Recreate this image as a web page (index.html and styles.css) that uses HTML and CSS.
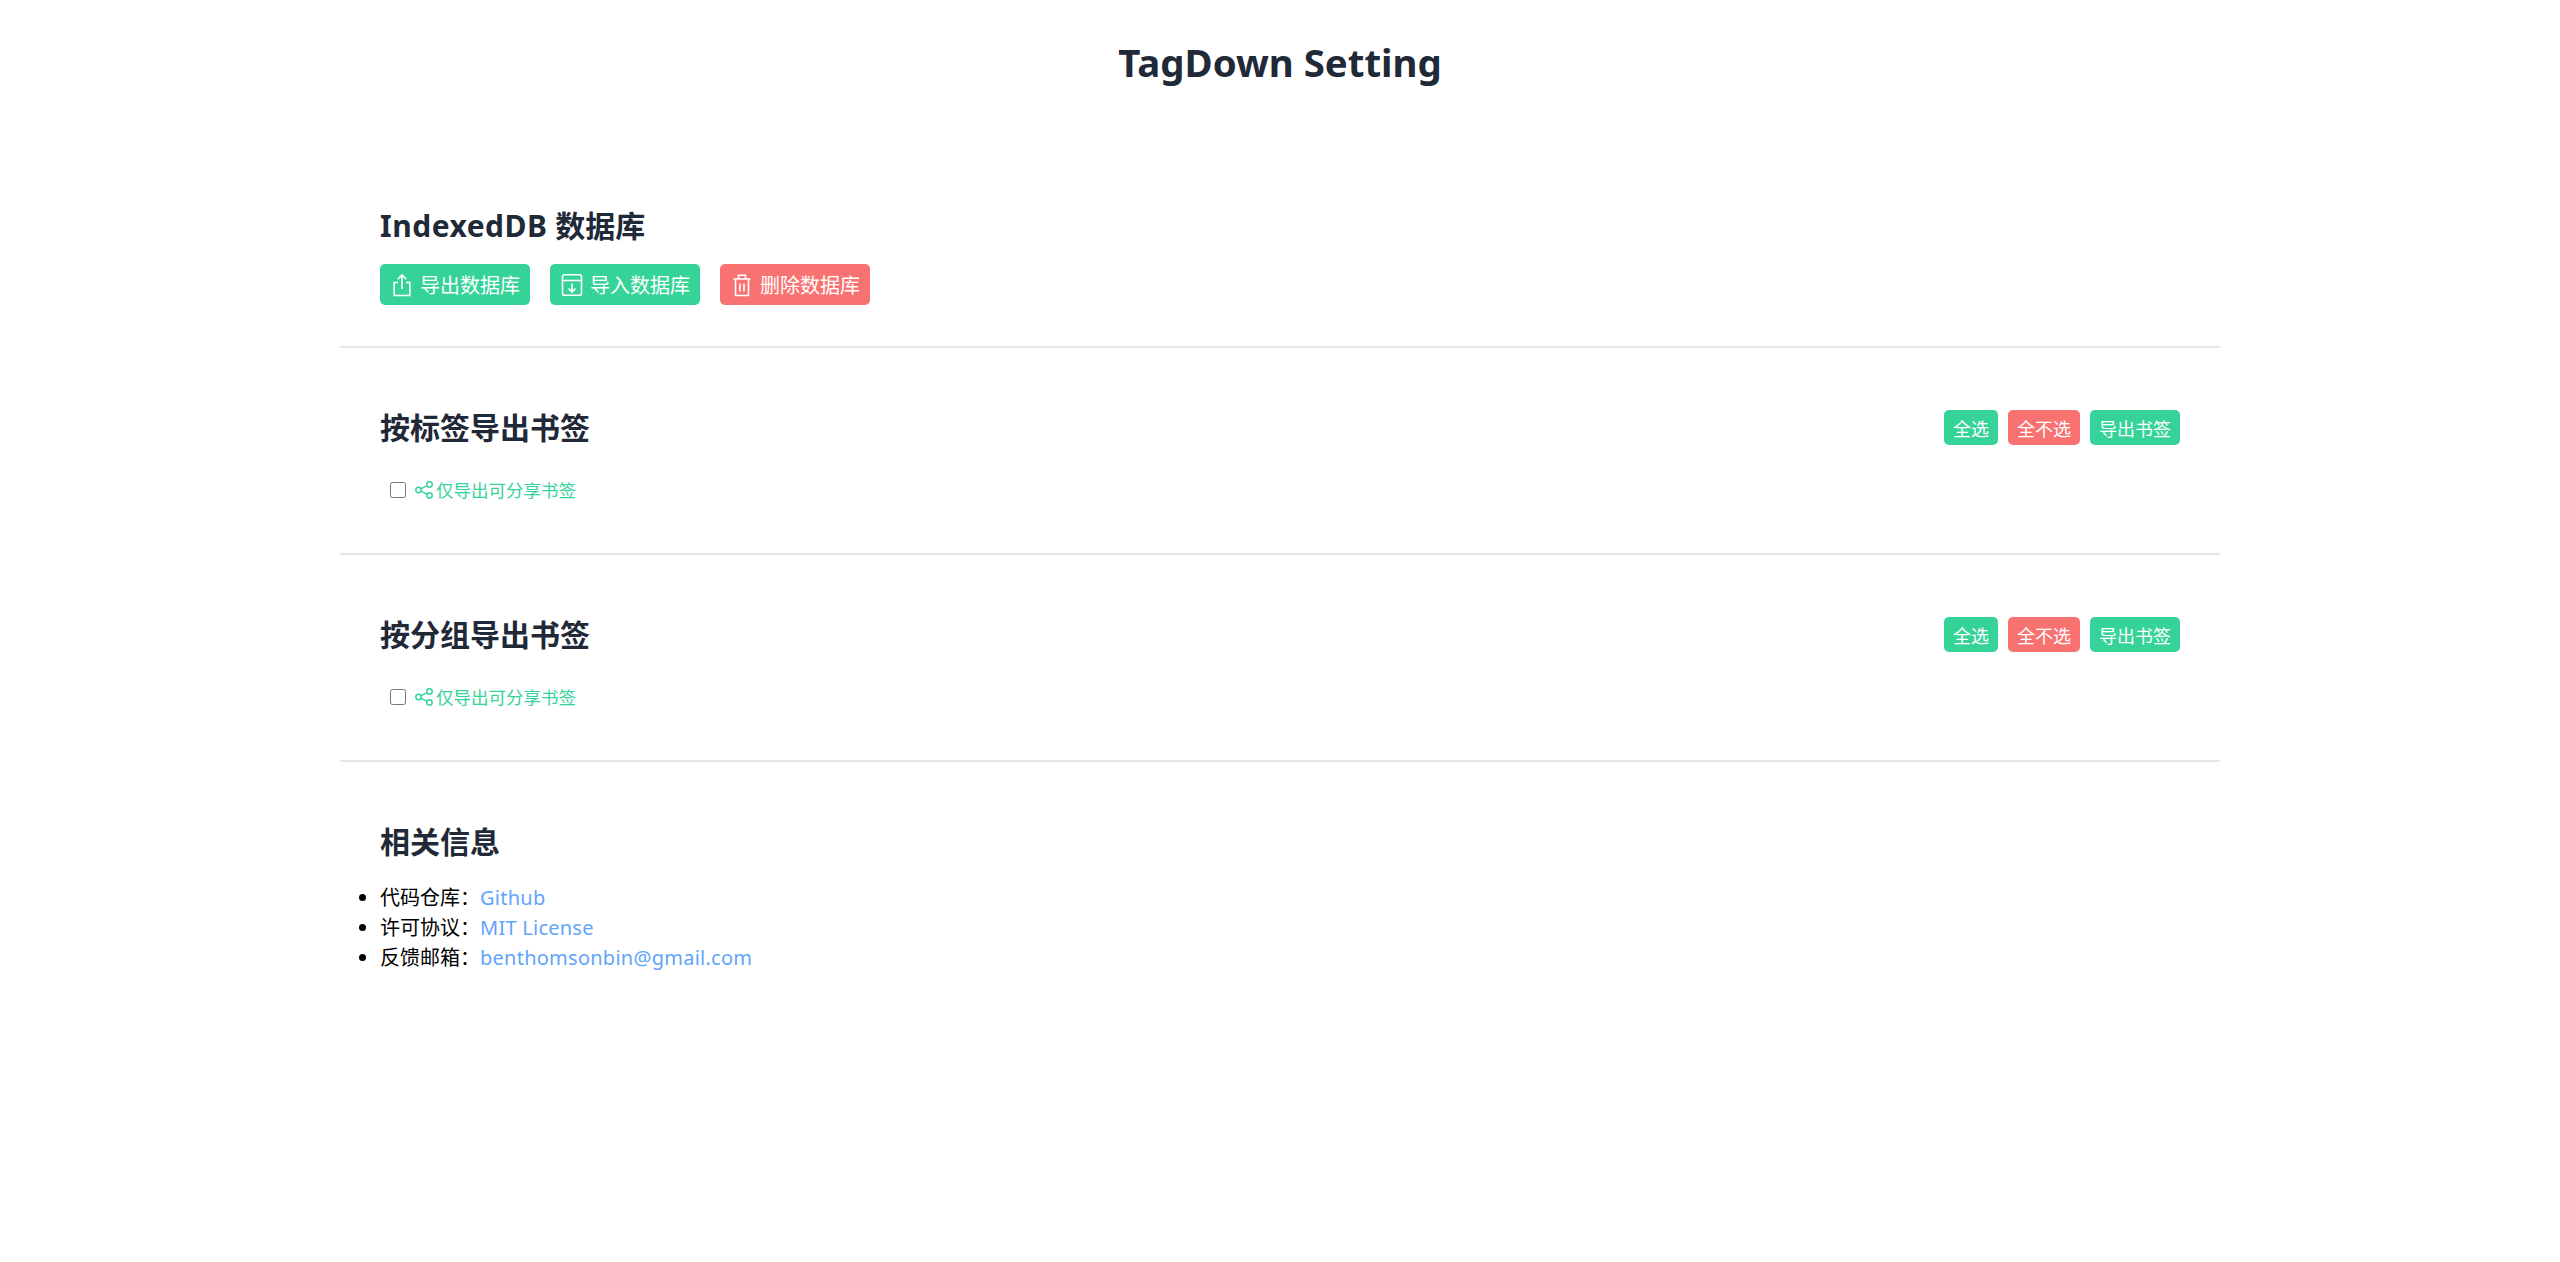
FILE: index.html
```html
<!DOCTYPE html>
<html lang="zh-CN">
<head>
    <meta charset="UTF-8">
    <title>TagDown Setting</title>
    <link rel="stylesheet" href="styles.css">
</head>
<body>
    <h1 class="page-title">TagDown Setting</h1>
    <main class="settings">
        <section class="section section-db">
            <h2><span class="latin">IndexedDB</span> 数据库</h2>
            <div class="actions">
                <button class="btn btn-green">
                    <svg viewBox="0 0 24 24"><path d="M8 9.5H4.2v13h15.6v-13H16M12 16V2M7.8 6.2 12 2l4.2 4.2"/></svg>
                    导出数据库
                </button>
                <button class="btn btn-green">
                    <svg viewBox="0 0 24 24"><path d="M4.500 1.700h15a2 2 0 0 1 2 2v16.600a2 2 0 0 1-2 2h-15a2 2 0 0 1-2-2V3.700a2 2 0 0 1 2-2zM2.500 7.500h19M12 10.500v8.500M8.500 15.500l3.500 3.500 3.500-3.500"/></svg>
                    导入数据库
                </button>
                <button class="btn btn-red">
                    <svg viewBox="0 0 24 24"><path d="M3.500 6h17M8.500 6V2.200h7V6M5.500 6v16.500h13V6M10 10.500v8M14 10.500v8"/></svg>
                    删除数据库
                </button>
            </div>
        </section>
        <section class="section">
            <div class="section-head">
                <h2>按标签导出书签</h2>
                <div class="small-actions">
                    <button class="btn-sm btn-green">全选</button>
                    <button class="btn-sm btn-red">全不选</button>
                    <button class="btn-sm btn-green">导出书签</button>
                </div>
            </div>
            <label class="share-only">
                <input type="checkbox">
                <svg viewBox="0 0 18 18"><circle cx="14.500" cy="3.500" r="2.700"/><circle cx="3.500" cy="9" r="2.700"/><circle cx="14.500" cy="14.500" r="2.700"/><path d="M5.900 7.800l6.200-3.100M5.900 10.200l6.200 3.100"/></svg>
                仅导出可分享书签
            </label>
        </section>
        <section class="section">
            <div class="section-head">
                <h2>按分组导出书签</h2>
                <div class="small-actions">
                    <button class="btn-sm btn-green">全选</button>
                    <button class="btn-sm btn-red">全不选</button>
                    <button class="btn-sm btn-green">导出书签</button>
                </div>
            </div>
            <label class="share-only">
                <input type="checkbox">
                <svg viewBox="0 0 18 18"><circle cx="14.500" cy="3.500" r="2.700"/><circle cx="3.500" cy="9" r="2.700"/><circle cx="14.500" cy="14.500" r="2.700"/><path d="M5.900 7.800l6.200-3.100M5.900 10.200l6.200 3.100"/></svg>
                仅导出可分享书签
            </label>
        </section>
        <section class="section section-last">
            <h2>相关信息</h2>
            <ul class="info">
                <li>代码仓库：<a href="#">Github</a></li>
                <li>许可协议：<a href="#">MIT License</a></li>
                <li>反馈邮箱：<a href="#">benthomsonbin@gmail.com</a></li>
            </ul>
        </section>
    </main>
</body>
</html>
```

FILE: styles.css
```css
body {
    margin: 0;
    padding: 0;
    background: #fff;
    color: #000;
    font-family: "Noto Sans", "Noto Sans CJK SC", sans-serif;
    font-size: 20px;
}
.page-title {
    margin: 0;
    padding-top: 35px;
    height: 71px;
    line-height: 54px;
    text-align: center;
    font-size: 38.400px;
    font-weight: 700;
    color: #1f2937;
}
.settings {
    width: 1880px;
    margin: 0 auto;
    padding-top: 40px;
}
.section {
    padding: 59px 40px 44px;
    border-bottom: 2px solid #e5e5ea;
}
.section-db {
    padding-bottom: 41px;
}
.section-last {
    border-bottom: none;
}
.section h2 {
    margin: 0;
    font-size: 30px;
    line-height: 41px;
    font-weight: 700;
    color: #1f2937;
}
.latin {
    letter-spacing: 0.500px;
}
.section-head {
    display: flex;
    justify-content: space-between;
    align-items: center;
}
.actions {
    display: flex;
    gap: 20px;
    margin-top: 18px;
}
.btn, .btn-sm {
    display: flex;
    align-items: center;
    border: none;
    color: #fff;
    font-family: inherit;
    border-radius: 5px;
}
.btn {
    box-sizing: border-box;
    width: 150px;
    height: 41px;
    padding: 0 10px;
    gap: 6px;
    font-size: 20px;
}
.btn svg {
    width: 24px;
    height: 24px;
    flex: none;
    fill: none;
    stroke: #fff;
    stroke-width: 1.600;
}
.btn-sm {
    height: 35px;
    padding: 0 9px;
    font-size: 18px;
}
.btn-green {
    background: #36d399;
}
.btn-red {
    background: #f87272;
}
.small-actions {
    display: flex;
    gap: 10px;
}
.share-only {
    display: flex;
    align-items: center;
    margin: 28px 0 5px;
    padding-left: 10px;
    color: #36d399;
    font-size: 17.500px;
    line-height: 28px;
}
.share-only input {
    width: 16px;
    height: 16px;
    margin: 0 9px 0 0;
}
.share-only svg {
    width: 18px;
    height: 18px;
    margin-right: 3px;
    fill: none;
    stroke: #36d399;
    stroke-width: 1.500;
}
.info {
    margin: 21px 0 0;
    padding: 0;
    line-height: 30px;
}
.info a {
    color: #60a5fa;
    letter-spacing: 0.250px;
    text-decoration: none;
}
```
